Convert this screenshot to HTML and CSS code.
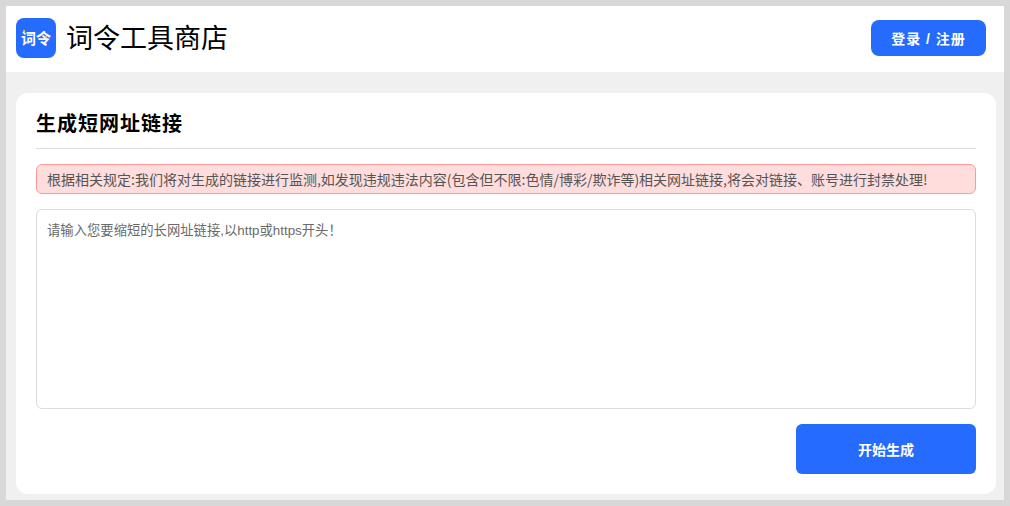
FILE: index.html
```html
<!DOCTYPE html>
<html lang="zh-CN">
<head>
<meta charset="utf-8">
<title>词令工具商店</title>
<link rel="stylesheet" href="styles.css">
</head>
<body>
<div class="frame">
  <header class="topbar">
    <div class="brand">
      <div class="logo">词令</div>
      <div class="brand-name">词令工具商店</div>
    </div>
    <button class="login" type="button">登录 / 注册</button>
  </header>
  <main class="content">
    <section class="card">
      <h1 class="card-title">生成短网址链接</h1>
      <div class="alert">根据相关规定:我们将对生成的链接进行监测,如发现违规违法内容(包含但不限:色情/博彩/欺诈等)相关网址链接,将会对链接、账号进行封禁处理!</div>
      <textarea class="input" placeholder="请输入您要缩短的长网址链接,以http或https开头！"></textarea>
      <div class="actions">
        <button class="submit" type="button">开始生成</button>
      </div>
    </section>
  </main>
</div>
</body>
</html>
```
FILE: styles.css
```css
* { box-sizing: border-box; }
html, body { margin: 0; height: 100%; }
body {
  font-family: "Liberation Sans", "Noto Sans CJK SC", sans-serif;
  background: #d8d8d8;
  padding: 6px;
  overflow: hidden;
}
.frame {
  height: 494px;
  display: flex;
  flex-direction: column;
  background: #f0f0f0;
}
.topbar {
  height: 66px;
  flex: none;
  background: #fff;
  display: flex;
  align-items: center;
  justify-content: space-between;
  padding: 0 18px 2px 10px;
}
.brand { display: flex; align-items: center; gap: 10px; }
.logo {
  position: relative;
  width: 40px;
  height: 40px;
  padding-bottom: 2px;
  border-radius: 8px;
  background: #246bfe;
  color: #fff;
  font-family: "Noto Sans CJK SC", sans-serif;
  font-size: 15px;
  font-weight: 700;
  display: flex;
  align-items: center;
  justify-content: center;
}
.logo::before,
.logo::after {
  content: "";
  position: absolute;
  width: 2px;
  height: 2px;
  background: #f5c04a;
}
.logo::before { left: 7px; top: 12px; }
.logo::after { left: 29px; top: 18px; }
.brand-name { font-size: 27px; color: #000; line-height: 40px; padding-top: 2px; }
.login {
  width: 115px;
  height: 36px;
  border: 0;
  border-radius: 8px;
  background: #246bfe;
  color: #fff;
  font: 700 14px "Liberation Sans", "Noto Sans CJK SC", sans-serif;
  letter-spacing: 1px;
  padding: 0;
}
.content { flex: 1; padding: 21px 8px 6px 10px; }
.card {
  height: 401px;
  background: #fff;
  border-radius: 12px;
  padding: 14px 20px 20px;
  display: flex;
  flex-direction: column;
}
.card-title {
  margin: 0;
  height: 42px;
  font-size: 20px;
  font-weight: 700;
  line-height: 34px;
  letter-spacing: 1px;
  color: #000;
  border-bottom: 1px solid #dcdcdc;
}
.alert {
  margin-top: 15px;
  height: 30px;
  line-height: 28px;
  padding: 0 10px;
  font-family: "Noto Sans CJK SC", sans-serif;
  font-size: 14px;
  color: #555;
  background: #ffdddd;
  border: 1px solid #f99;
  border-radius: 6px;
  white-space: nowrap;
}
.input {
  display: block;
  width: 100%;
  height: 200px;
  margin-top: 15px;
  padding: 11px 10px 10px;
  resize: none;
  font: 13.3333px/20px "Liberation Sans", "Noto Sans CJK SC", sans-serif;
  border: 1px solid #dcdcdc;
  border-radius: 6px;
  outline: 0;
}
.input::placeholder { color: #6a6a6a; opacity: 1; }
.actions { display: flex; justify-content: flex-end; margin-top: 15px; }
.submit {
  width: 180px;
  height: 50px;
  border: 0;
  border-radius: 6px;
  background: #246bfe;
  color: #fff;
  font: 700 14px "Liberation Sans", "Noto Sans CJK SC", sans-serif;
  padding: 0;
}
```
